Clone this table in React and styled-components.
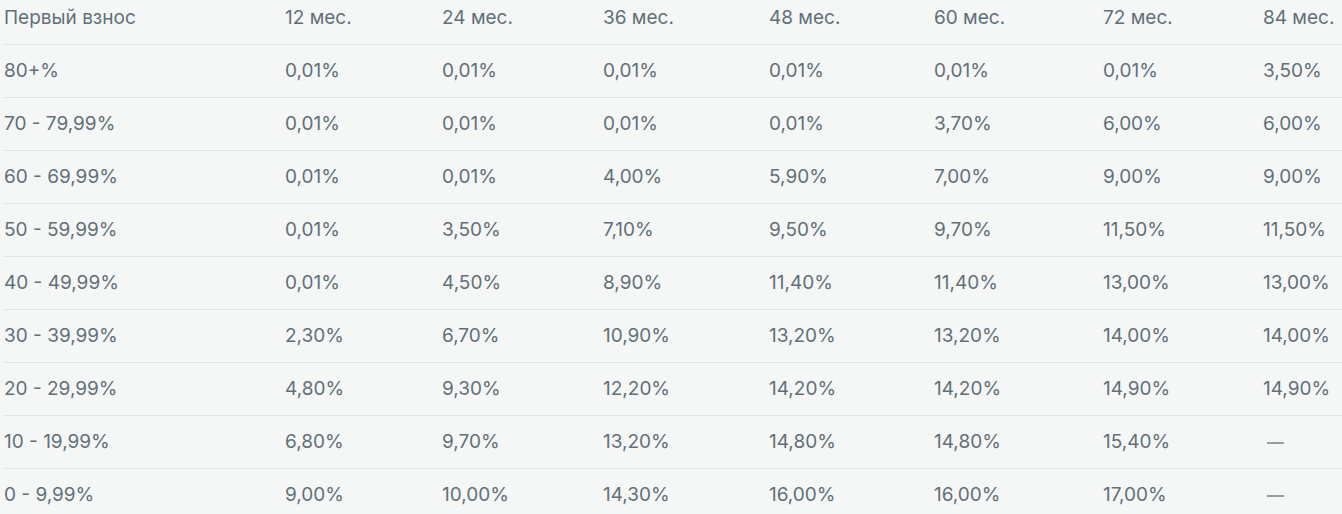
import React from 'react';
import styled, { createGlobalStyle } from 'styled-components';

const GlobalStyle = createGlobalStyle`
  html, body {
    margin: 0;
    background: #f5f7f6;
  }
  body {
    font-family: "Inter", "Liberation Sans", sans-serif;
    color: #617077;
    overflow: hidden;
  }
`;

const terms = ['12 мес.', '24 мес.', '36 мес.', '48 мес.', '60 мес.', '72 мес.', '84 мес.'];

const rates = [
    ['80+%', '0,01%', '0,01%', '0,01%', '0,01%', '0,01%', '0,01%', '3,50%'],
    ['70 - 79,99%', '0,01%', '0,01%', '0,01%', '0,01%', '3,70%', '6,00%', '6,00%'],
    ['60 - 69,99%', '0,01%', '0,01%', '4,00%', '5,90%', '7,00%', '9,00%', '9,00%'],
    ['50 - 59,99%', '0,01%', '3,50%', '7,10%', '9,50%', '9,70%', '11,50%', '11,50%'],
    ['40 - 49,99%', '0,01%', '4,50%', '8,90%', '11,40%', '11,40%', '13,00%', '13,00%'],
    ['30 - 39,99%', '2,30%', '6,70%', '10,90%', '13,20%', '13,20%', '14,00%', '14,00%'],
    ['20 - 29,99%', '4,80%', '9,30%', '12,20%', '14,20%', '14,20%', '14,90%', '14,90%'],
    ['10 - 19,99%', '6,80%', '9,70%', '13,20%', '14,80%', '14,80%', '15,40%', null],
    ['0 - 9,99%', '9,00%', '10,00%', '14,30%', '16,00%', '16,00%', '17,00%', null],
];

const App = () => {
    return (
        <>
            <GlobalStyle />
            <Table>
                <Row $head>
                    <Cell>Первый взнос</Cell>
                    {terms.map(t => <Cell key={t}>{t}</Cell>)}
                </Row>
                {rates.map(row => (
                    <Row key={row[0]}>
                        {row.map((value, i) => (
                            value === null
                                ? <Cell key={i}><Dash /></Cell>
                                : <Cell key={i}>{value}</Cell>
                        ))}
                    </Row>
                ))}
            </Table>
        </>
    );
};

const Table = styled.div`
    display: flex;
    flex-direction: column;
    padding-left: 4px;
`;

const Row = styled.div`
    display: grid;
    grid-template-columns: 281px 157px 161px 166px 165px 169px 160px 1fr;
    align-items: center;
    box-sizing: border-box;
    height: ${p => (p.$head ? '45px' : '53px')};
    padding-bottom: ${p => (p.$head ? '9px' : '0')};
    border-bottom: 1px solid #e1e4e3;
`;

const Cell = styled.div`
    font-size: 19px;
    line-height: 24px;
    white-space: nowrap;
`;

const Dash = styled.span`
    display: inline-block;
    width: 17px;
    height: 2px;
    margin-left: 4px;
    vertical-align: middle;
    background: #95a09f;
`;

export default App;
